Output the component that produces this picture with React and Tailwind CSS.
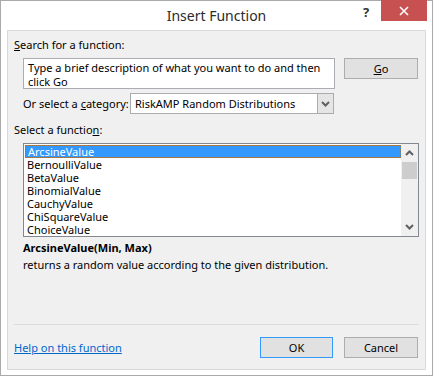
import React from "react";

const items = [
  "ArcsineValue",
  "BernoulliValue",
  "BetaValue",
  "BinomialValue",
  "CauchyValue",
  "ChiSquareValue",
  "ChoiceValue",
];

function Chevron({ up }) {
  return (
    <svg width="9" height="6" viewBox="0 0 9 6" className="block">
      <path
        d={up ? "M1 5 L4.5 1.5 L8 5" : "M1 1 L4.5 4.5 L8 1"}
        fill="none"
        stroke="#606060"
        strokeWidth="2"
      />
    </svg>
  );
}

export default function App() {
  return (
    <div
      className="w-[433px] h-[376px] bg-white border border-[#aaaaaa] flex flex-col text-[11px] leading-[15px] text-black"
      style={{ fontFamily: '"Segoe UI", "Noto Sans", sans-serif' }}
    >
      {/* title bar */}
      <div className="h-[29px] flex items-start relative">
        <div className="flex-1 text-center text-[14px] leading-[19px] pt-[5px] text-[#2b2b2b]">Insert Function</div>
        <div className="absolute left-[362px] top-[4px] text-[13px] font-bold text-[#333]">?</div>
        <div className="absolute left-[380px] top-[-1px] w-[46px] h-[21px] bg-[#c75050] flex items-center justify-center">
          <svg width="10" height="10" viewBox="0 0 10 10">
            <path d="M1 1 L9 9 M9 1 L1 9" stroke="#fff" strokeWidth="1.6" />
          </svg>
        </div>
      </div>

      {/* dialog body */}
      <div className="ml-[6px] w-[419px] h-[340px] bg-[#f0f0f0] border border-[#d9d9d9] flex flex-col pl-[6px] whitespace-nowrap">
        <div className="mt-[6px]">
          <span className="underline">S</span>earch for a function:
        </div>

        <div className="mt-[6px] flex items-start">
          <div className="ml-[9px] w-[312px] h-[31px] bg-white border border-[#abadb3] px-[4px] pt-[2px] leading-[14px] whitespace-normal">
            Type a brief description of what you want to do and then click Go
          </div>
          <button className="ml-[9px] w-[74px] h-[21px] bg-[#e1e1e1] border border-[#adadad] flex items-center justify-center">
            <span className="underline">G</span>o
          </button>
        </div>

        <div className="mt-[4px] flex items-center">
          <div className="ml-[9px] w-[107px]">
            Or select a <span className="underline">c</span>ategory:
          </div>
          <div className="w-[204px] h-[21px] bg-white border border-[#acacac] flex items-center">
            <div className="flex-1 pl-[4px]">RiskAMP Random Distributions</div>
            <div className="w-[16px] h-full bg-[#e5e5e5] border-l border-[#acacac] flex items-center justify-center">
              <Chevron />
            </div>
          </div>
        </div>

        <div className="mt-[8px]">
          Select a functio<span className="underline">n</span>:
        </div>

        <div className="mt-[6px] ml-[9px] w-[396px] h-[94px] bg-white border border-[#828790] flex">
          <div className="flex-1 pl-[1px] pt-[1px] flex flex-col">
            {items.map((it, i) => (
              <div
                key={it}
                className={`h-[13px] pl-[2px] ${
                  i === 0
                    ? "leading-[11px] bg-[#3399ff] text-white border border-dotted border-[#a0703a] pl-[1px]"
                    : "leading-[13px]"
                }`}
              >
                {it}
              </div>
            ))}
          </div>
          <div className="w-[17px] bg-[#f0f0f0] flex flex-col items-center">
            <div className="h-[18px] flex items-center justify-center">
              <Chevron up />
            </div>
            <div className="w-[15px] h-[17px] bg-[#cdcdcd]" />
            <div className="flex-1" />
            <div className="h-[18px] flex items-center justify-center">
              <Chevron />
            </div>
          </div>
        </div>

        <div className="mt-[3px] ml-[9px] font-bold">ArcsineValue(Min, Max)</div>
        <div className="mt-[2px] ml-[9px]">returns a random value according to the given distribution.</div>

        <div className="mt-[52px] w-[405px] h-px bg-[#dcdcdc]" />

        <div className="mt-[12px] flex items-center">
          <a className="text-[#0066cc] underline w-[246px]">Help on this function</a>
          <button className="w-[73px] h-[21px] bg-[#e1e1e1] border border-[#3399ff]">OK</button>
          <button className="ml-[11px] w-[74px] h-[21px] bg-[#e1e1e1] border border-[#adadad]">Cancel</button>
        </div>
      </div>
    </div>
  );
}
